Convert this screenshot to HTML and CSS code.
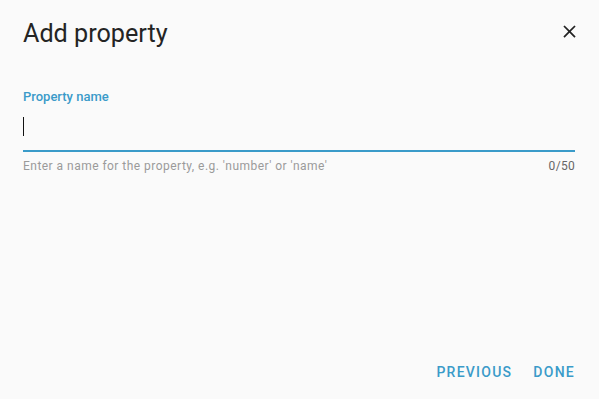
FILE: index.html
```html
<!DOCTYPE html>
<html lang="en">
<head>
<meta charset="utf-8">
<title>Add property</title>
<link rel="stylesheet" href="styles.css">
</head>
<body>
<div class="dialog">
  <header class="dialog-header">
    <h2 class="dialog-title">Add property</h2>
    <button class="close-btn" aria-label="Close">
      <svg viewBox="0 0 24 24" width="21" height="21"><path d="M19,6.41L17.59,5L12,10.59L6.41,5L5,6.41L10.59,12L5,17.59L6.41,19L12,13.41L17.59,19L19,17.59L13.41,12L19,6.41Z"/></svg>
    </button>
  </header>
  <div class="dialog-content">
    <div class="field">
      <div class="field-label">Property name</div>
      <div class="field-input"><span class="caret"></span></div>
      <div class="field-help">
        <span class="help-text">Enter a name for the property, e.g. 'number' or 'name'</span>
        <span class="counter">0/50</span>
      </div>
    </div>
  </div>
  <div class="dialog-actions">
    <button class="text-btn">Previous</button>
    <button class="text-btn">Done</button>
  </div>
</div>
</body>
</html>
```

FILE: styles.css
```css
html, body {
  margin: 0;
  padding: 0;
  background: #fafafa;
}

body {
  font-family: Roboto, "Liberation Sans", sans-serif;
  color: #212121;
}

.dialog {
  height: 399px;
  display: flex;
  flex-direction: column;
  box-sizing: border-box;
}

.dialog-header {
  display: flex;
  align-items: flex-start;
  justify-content: space-between;
  padding: 18px 19.5px 0 23px;
}

.dialog-title {
  margin: 0;
  font-size: 25.18px;
  font-weight: 400;
  line-height: 32px;
  color: #242424;
}

.close-btn {
  border: 0;
  background: none;
  padding: 0;
  width: 21px;
  height: 21px;
  margin-top: 3px;
  display: flex;
  cursor: pointer;
}

.close-btn svg {
  fill: #222;
}

.dialog-content {
  padding: 0 24px 0 23px;
  margin-top: 39px;
}

.field-label {
  font-size: 13px;
  line-height: 16px;
  font-weight: 500;
  color: #3a9bc9;
}

.field-input {
  padding-top: 12px;
  height: 33px;
  border-bottom: 2px solid #3a9bc9;
}

.caret {
  display: block;
  width: 1px;
  height: 19px;
  background: #111;
}

.field-help {
  display: flex;
  justify-content: space-between;
  margin-top: 6px;
  font-size: 12px;
  line-height: 16px;
  letter-spacing: 0.47px;
}

.help-text {
  color: #9a9a9a;
}

.counter {
  color: #666;
  letter-spacing: 0.3px;
}

.dialog-actions {
  margin-top: auto;
  display: flex;
  justify-content: flex-end;
  gap: 21px;
  padding: 0 24px 9px 0;
}

.text-btn {
  border: 0;
  background: none;
  padding: 0;
  font-family: Roboto, "Liberation Sans", sans-serif;
  font-size: 14px;
  font-weight: 500;
  letter-spacing: 1.25px;
  text-transform: uppercase;
  line-height: 36px;
  color: #3a9bc9;
  cursor: pointer;
}
```
